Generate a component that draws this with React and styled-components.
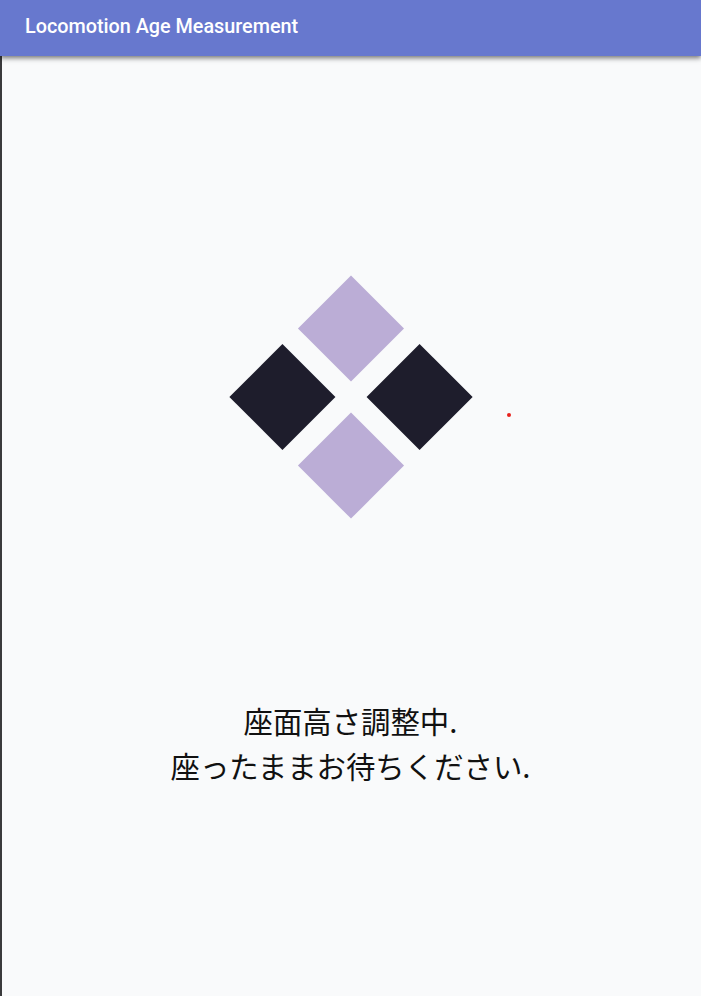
import React from "react";
import styled, { createGlobalStyle } from "styled-components";

const GlobalStyle = createGlobalStyle`
  html, body {
    margin: 0;
    padding: 0;
    background: #f9fafb;
  }
  #root {
    min-height: 996px;
  }
`;

const Page = styled.div`
  position: relative;
  display: flex;
  flex-direction: column;
  min-height: 996px;
  background: #f9fafb;
  border-left: 2px solid #3a3a3c;
  box-sizing: border-box;
`;

const AppBar = styled.header`
  position: relative;
  z-index: 1;
  height: 56px;
  margin-left: -2px;
  display: flex;
  align-items: center;
  padding-left: 25px;
  padding-bottom: 4px;
  box-sizing: border-box;
  background: #6778ce;
  box-shadow: 0 2px 5px rgba(0, 0, 0, 0.55);
`;

const Title = styled.h1`
  margin: 0;
  font-family: Roboto, "Liberation Sans", sans-serif;
  font-weight: 500;
  font-size: 19.8px;
  color: #ffffff;
`;

const Main = styled.main`
  position: relative;
  display: flex;
  flex-direction: column;
  align-items: center;
  padding-top: 255px;
  padding-right: 2px;
`;

// 2x2 の四角を 45度回転させたローディング表示
const Spinner = styled.div`
  display: grid;
  grid-template-columns: 75px 75px;
  grid-template-rows: 75px 75px;
  gap: 22px;
  transform: rotate(45deg);
`;

const Tile = styled.div`
  background: ${(props) => (props.$dark ? "#1e1d2c" : "#bbadd6")};
`;

const Dot = styled.span`
  position: absolute;
  left: 505px;
  top: 357px;
  width: 4px;
  height: 4px;
  border-radius: 50%;
  background: #e8201c;
`;

const Message = styled.p`
  margin: 215px 0 0;
  text-align: center;
  font-family: "Noto Sans CJK JP", "Noto Sans", sans-serif;
  font-weight: 400;
  font-size: 29.4px;
  line-height: 45px;
  color: #111111;
`;

const App = () => {
  return (
    <React.Fragment>
      <GlobalStyle />
      <Page>
        <AppBar>
          <Title>Locomotion Age Measurement</Title>
        </AppBar>
        <Main>
          <Spinner>
            <Tile />
            <Tile $dark />
            <Tile $dark />
            <Tile />
          </Spinner>
          <Dot />
          <Message>
            座面高さ調整中.
            <br />
            座ったままお待ちください.
          </Message>
        </Main>
      </Page>
    </React.Fragment>
  );
};

export default App;
